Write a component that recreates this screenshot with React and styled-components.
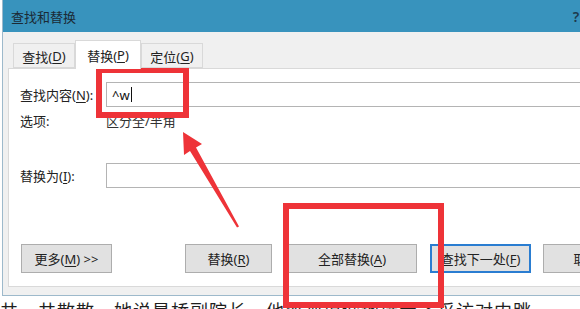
import React from "react";
import styled, { createGlobalStyle } from "styled-components";

const GlobalStyle = createGlobalStyle`
  html, body {
    margin: 0;
    padding: 0;
    background: #ffffff;
  }
  * { box-sizing: border-box; }
`;

const UI_FONT = `"Segoe UI", "Noto Sans", "Noto Sans CJK SC", sans-serif`;

const Screen = styled.div`
  position: relative;
  width: 580px;
  height: 309px;
  overflow: hidden;
  background: #ffffff;
  font-family: ${UI_FONT};
`;

const Dialog = styled.div`
  width: 640px;
  margin-left: 2px;
  background: #f0f0f0;
  border-left: 1px solid #9db9cb;
  border-bottom: 1px solid #9db9cb;
  display: flex;
  flex-direction: column;
`;

const TitleBar = styled.div`
  height: 32px;
  background: #3893bd;
  display: flex;
  align-items: center;
  padding-left: 8px;
  color: #1b2a35;
  font-size: 13px;
`;

const Title = styled.span`
  flex: 1;
`;

const TitleButton = styled.span`
  width: ${(p) => p.w}px;
  text-align: center;
  font-size: 14px;
  font-weight: 600;
  color: #1d3a4d;
`;

const Body = styled.div`
  padding: 8px 0 8px 5px;
`;

const TabStrip = styled.div`
  display: flex;
  align-items: flex-end;
  height: 28px;
  padding-left: 5px;
  position: relative;
  z-index: 1;
`;

const Tab = styled.div`
  height: ${(p) => (p.active ? 29 : 25)}px;
  width: ${(p) => p.w}px;
  display: flex;
  align-items: center;
  justify-content: center;
  padding-top: ${(p) => (p.active ? 0 : 1)}px;
  font-size: 13px;
  color: #222;
  background: ${(p) => (p.active ? "#ffffff" : "#f0f0f0")};
  border: 1px solid #d9d9d9;
  border-bottom: ${(p) => (p.active ? "none" : "1px solid #d9d9d9")};
  margin-bottom: ${(p) => (p.active ? -1 : 0)}px;
  & + & {
    border-left: ${(p) => (p.active ? "1px solid #d9d9d9" : "none")};
  }
`;

const Key = styled.span`
  text-decoration: underline;
  text-underline-offset: 2px;
`;

const Panel = styled.div`
  height: 219px;
  background: #ffffff;
  border: 1px solid #d9d9d9;
  padding: 13px 0 0 11px;
  display: flex;
  flex-direction: column;
`;

const FieldRow = styled.div`
  display: grid;
  grid-template-columns: 86px 1fr;
  align-items: center;
  margin-top: ${(p) => p.mt || 0}px;
`;

const Label = styled.label`
  font-size: 13px;
  line-height: 16px;
  color: #222;
  white-space: nowrap;
`;

const Input = styled.div`
  height: 25px;
  border: 1px solid #b4b4b4;
  background: #fff;
  display: flex;
  align-items: center;
  padding-left: 5px;
  font-size: 13px;
  color: #111;
`;

const Caret = styled.span`
  display: inline-block;
  width: 1px;
  height: 15px;
  background: #111;
  margin-left: 1px;
`;

const OptionValue = styled.span`
  font-size: 13px;
  line-height: 16px;
  color: #333;
`;

const ButtonRow = styled.div`
  display: flex;
  margin-top: 56px;
  padding-left: 1px;
`;

const Button = styled.div`
  flex: none;
  width: ${(p) => p.w}px;
  height: 29px;
  margin-left: ${(p) => p.ml || 0}px;
  display: flex;
  align-items: center;
  justify-content: center;
  background: #e1e1e1;
  border: ${(p) => (p.primary ? "2px solid #2a7dd1" : "1px solid #adadad")};
  font-size: 13px;
  line-height: 16px;
  color: #222;
  white-space: nowrap;
`;

const PageText = styled.div`
  margin-top: 3px;
  font-family: "Noto Sans CJK SC", sans-serif;
  font-size: 18px;
  line-height: 22px;
  color: #1e1e1e;
  white-space: nowrap;
  letter-spacing: 1px;
`;

const Annotation = styled.div`
  position: absolute;
  left: ${(p) => p.x}px;
  top: ${(p) => p.y}px;
  width: ${(p) => p.w}px;
  height: ${(p) => p.h}px;
  border: 6px solid #ee3338;
  pointer-events: none;
`;

const ArrowLayer = styled.svg`
  position: absolute;
  left: 0;
  top: 0;
  pointer-events: none;
`;

export default function App() {
  return (
    <>
      <GlobalStyle />
      <Screen>
        <Dialog>
          <TitleBar>
            <Title>查找和替换</Title>
            <TitleButton w={12}>?</TitleButton>
            <TitleButton w={60}>✕</TitleButton>
          </TitleBar>
          <Body>
            <TabStrip>
              <Tab w={62}>
                查找(<Key>D</Key>)
              </Tab>
              <Tab w={66} active>
                替换(<Key>P</Key>)
              </Tab>
              <Tab w={62}>
                定位(<Key>G</Key>)
              </Tab>
            </TabStrip>
            <Panel>
              <FieldRow>
                <Label>
                  查找内容(<Key>N</Key>):
                </Label>
                <Input>
                  ^w<Caret />
                </Input>
              </FieldRow>
              <FieldRow mt={6}>
                <Label>选项:</Label>
                <OptionValue>区分全/半角</OptionValue>
              </FieldRow>
              <FieldRow mt={34}>
                <Label>
                  替换为(<Key>I</Key>):
                </Label>
                <Input />
              </FieldRow>
              <ButtonRow>
                <Button w={91}>
                  更多(<Key>M</Key>) &gt;&gt;
                </Button>
                <Button w={87} ml={73}>
                  替换(<Key>R</Key>)
                </Button>
                <Button w={130} ml={15}>
                  全部替换(<Key>A</Key>)
                </Button>
                <Button w={101} ml={13} primary>
                  查找下一处(<Key>F</Key>)
                </Button>
                <Button w={87} ml={12}>
                  取消
                </Button>
              </ButtonRow>
            </Panel>
          </Body>
        </Dialog>
        <PageText>共，共散散，她说是桥副院长，他蔡视坦诚地接受了采访对内跳</PageText>

        <Annotation x={96} y={67} w={93} h={51} />
        <Annotation x={283} y={203} w={161} h={105} />
        <ArrowLayer width="580" height="309" viewBox="0 0 580 309">
          <polygon
            points="183,132 202,144 196,147.5 239,226.5 237,227.5 190,151 184,155"
            fill="#ee3338"
          />
        </ArrowLayer>
      </Screen>
    </>
  );
}
